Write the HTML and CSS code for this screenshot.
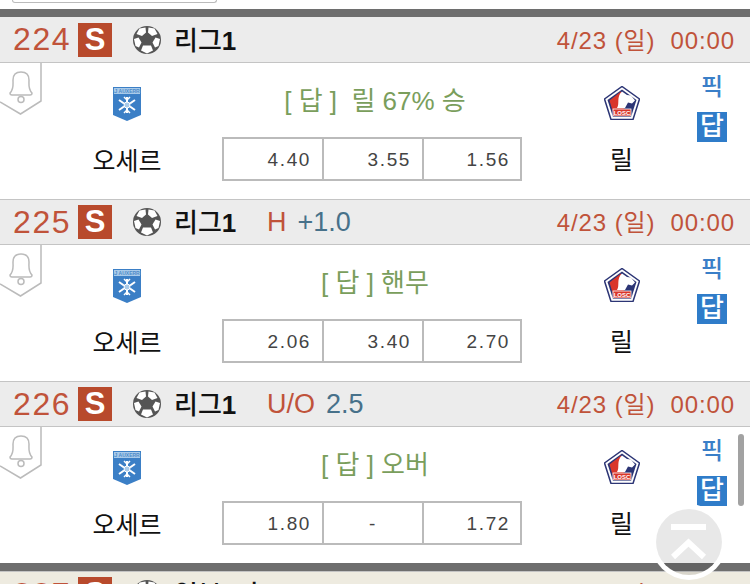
FILE: index.html
```html
<!DOCTYPE html>
<html lang="ko">
  <head>
    <meta charset="UTF-8" />
    <meta name="viewport" content="width=device-width, initial-scale=1.0" />
    <title>경기 목록</title>
    <link rel="stylesheet" href="styles.css">
  </head>
  <body>
    <svg class="defs" width="0" height="0">
      <symbol id="ball" viewBox="0 0 28 28">
        <circle cx="14" cy="14" r="14" fill="#555" />
        <path d="M6.500 2.500 L12.500 1.500 L13 6.500 L9 10 L3.500 8 Z" fill="#fff" />
        <path d="M21.500 2.500 L15.500 1.500 L15 6.500 L19 10 L24.500 8 Z" fill="#fff" />
        <path d="M1 13 L5.500 11.500 L8.500 16.500 L6 21.500 L2.500 20 Z" fill="#fff" />
        <path d="M27 13 L22.500 11.500 L19.500 16.500 L22 21.500 L25.500 20 Z" fill="#fff" />
        <path d="M10 19.500 L18 19.500 L20 24.500 L14 27.500 L8 24.500 Z" fill="#fff" />
      </symbol>
      <symbol id="auxerre" viewBox="0 0 28 34">
        <path d="M0 0 H28 V28 L14 34 L0 28 Z" fill="#3b7fc6" />
        <rect x="1" y="1" width="26" height="6" fill="#a9cbea" />
        <text x="14" y="6" font-size="5" font-family="Liberation Sans" font-weight="bold" fill="#4f8bc9" text-anchor="middle">AJ AUXERRE</text>
        <g stroke="#fff" stroke-width="2" fill="none">
          <path d="M14 10 V15 M14 21 V26 M6 13 L11 16.500 M22 13 L17 16.500 M6 23 L11 19.500 M22 23 L17 19.500" />
          <path d="M11 10 L14 13 L17 10 M11 26 L14 23 L17 26" stroke-width="1.500" />
        </g>
        <circle cx="14" cy="18" r="3" fill="#a9cbea" stroke="#fff" />
      </symbol>
      <symbol id="lille" viewBox="0 0 36 34">
        <path d="M18 0.500 L35.500 13 L29 33.500 H7 L0.500 13 Z" fill="#fff" stroke="#2c3575" stroke-width="1.500" />
        <path d="M18 3.500 L32.500 14 L27 31 H9 L3.500 14 Z" fill="#2c3575" />
        <path d="M17 5.500 L5.500 14.500 L10 29.500 H26 L27 26 L19 22 Z" fill="#d9362b" />
        <path d="M18 5.500 L23 9 L27 9.500 L31 14.500 L28 17.500 L24 16.500 L21 22 L13 22 C16 18 12 11 18 5.500 Z" fill="#fff" />
        <rect x="9" y="23" width="18" height="7" fill="#d9362b" stroke="#fff" stroke-width="0.800" />
        <text x="18" y="29" font-size="6" font-family="Liberation Sans" font-weight="bold" fill="#fff" text-anchor="middle">LOSC</text>
      </symbol>
    </svg>

    <div class="top-strip"><div class="search-edge"></div></div>
    <div class="dark-bar"></div>

    <section class="match">
      <header class="match-head">
        <span class="no">224</span><span class="grade">S</span>
        <svg class="ball"><use href="#ball" /></svg>
        <span class="league">리그<b>1</b></span>
        <span class="date">4/23 (일)<span class="time">00:00</span></span>
      </header>
      <div class="match-body">
        <div class="alarm">
          <svg width="42" height="52" viewBox="0 0 42 52">
            <path d="M41 0 V38 L20.500 51 L0 39" fill="#fff" stroke="#bbb" stroke-width="1.500" />
            <g fill="none" stroke="#bbb" stroke-width="1.500">
              <path d="M10 30 C14 26 13 22 13 17 C13 12 16 9 21 9 C26 9 29 12 29 17 C29 22 28 26 32 30 C32 31 32 32 30 32 H12 C10 32 10 31 10 30 Z" />
              <circle cx="21" cy="36.500" r="3" />
            </g>
          </svg>
        </div>
        <div class="team"><svg class="crest-a"><use href="#auxerre" /></svg><span class="team-name">오세르</span></div>
        <div class="middle">
          <p class="answer">[ 답 ]&nbsp; 릴 67% 승</p>
          <div class="odds"><span>4.40</span><span>3.55</span><span>1.56</span></div>
        </div>
        <div class="team team-away"><svg class="crest-b"><use href="#lille" /></svg><span class="team-name">릴</span></div>
        <div class="pick"><span class="pick-label">픽</span><span class="pick-btn">답</span></div>
      </div>
    </section>

    <section class="match">
      <header class="match-head">
        <span class="no">225</span><span class="grade">S</span>
        <svg class="ball"><use href="#ball" /></svg>
        <span class="league">리그<b>1</b></span>
        <span class="kind">H</span><span class="line">+1.0</span>
        <span class="date">4/23 (일)<span class="time">00:00</span></span>
      </header>
      <div class="match-body">
        <div class="alarm">
          <svg width="42" height="52" viewBox="0 0 42 52">
            <path d="M41 0 V38 L20.500 51 L0 39" fill="#fff" stroke="#bbb" stroke-width="1.500" />
            <g fill="none" stroke="#bbb" stroke-width="1.500">
              <path d="M10 30 C14 26 13 22 13 17 C13 12 16 9 21 9 C26 9 29 12 29 17 C29 22 28 26 32 30 C32 31 32 32 30 32 H12 C10 32 10 31 10 30 Z" />
              <circle cx="21" cy="36.500" r="3" />
            </g>
          </svg>
        </div>
        <div class="team"><svg class="crest-a"><use href="#auxerre" /></svg><span class="team-name">오세르</span></div>
        <div class="middle">
          <p class="answer">[ 답 ] 핸무</p>
          <div class="odds"><span>2.06</span><span>3.40</span><span>2.70</span></div>
        </div>
        <div class="team team-away"><svg class="crest-b"><use href="#lille" /></svg><span class="team-name">릴</span></div>
        <div class="pick"><span class="pick-label">픽</span><span class="pick-btn">답</span></div>
      </div>
    </section>

    <section class="match">
      <header class="match-head">
        <span class="no">226</span><span class="grade">S</span>
        <svg class="ball"><use href="#ball" /></svg>
        <span class="league">리그<b>1</b></span>
        <span class="kind">U/O</span><span class="line">2.5</span>
        <span class="date">4/23 (일)<span class="time">00:00</span></span>
      </header>
      <div class="match-body">
        <div class="alarm">
          <svg width="42" height="52" viewBox="0 0 42 52">
            <path d="M41 0 V38 L20.500 51 L0 39" fill="#fff" stroke="#bbb" stroke-width="1.500" />
            <g fill="none" stroke="#bbb" stroke-width="1.500">
              <path d="M10 30 C14 26 13 22 13 17 C13 12 16 9 21 9 C26 9 29 12 29 17 C29 22 28 26 32 30 C32 31 32 32 30 32 H12 C10 32 10 31 10 30 Z" />
              <circle cx="21" cy="36.500" r="3" />
            </g>
          </svg>
        </div>
        <div class="team"><svg class="crest-a"><use href="#auxerre" /></svg><span class="team-name">오세르</span></div>
        <div class="middle">
          <p class="answer">[ 답 ] 오버</p>
          <div class="odds"><span>1.80</span><span class="odds-none">-</span><span>1.72</span></div>
        </div>
        <div class="team team-away"><svg class="crest-b"><use href="#lille" /></svg><span class="team-name">릴</span></div>
        <div class="pick"><span class="pick-label">픽</span><span class="pick-btn">답</span></div>
      </div>
    </section>

    <div class="dark-bar"></div>
    <section class="match">
      <header class="match-head match-head-next">
        <span class="no">227</span><span class="grade">S</span>
        <svg class="ball"><use href="#ball" /></svg>
        <span class="league">일본J리</span>
        <span class="date">4/23 (일)<span class="time">00:00</span></span>
      </header>
    </section>

    <div class="scroll-thumb"></div>
    <a class="to-top" href="#">
      <svg width="36" height="36" viewBox="0 0 36 36">
        <path d="M0 3 H35" stroke="#fff" stroke-width="6" />
        <path d="M2 33 L17.500 18.500 L33 33" fill="none" stroke="#fff" stroke-width="6" />
      </svg>
    </a>
  </body>
</html>
```

FILE: styles.css
```css
html,
body {
  height: 100%;
}

body {
  margin: 0;
  height: 584px;
  overflow: hidden;
  position: relative;
  font-family: "Liberation Sans", "Noto Sans CJK KR", sans-serif;
  background-color: #fff;
}

.defs {
  display: none;
}

.top-strip {
  height: 9px;
}

.search-edge {
  width: 205px;
  height: 3px;
  margin-left: 12px;
  box-sizing: border-box;
  border: 1px solid #bbb;
  border-top: none;
  border-radius: 0 0 6px 6px;
}

.dark-bar {
  height: 8px;
  background-color: #6e6e6e;
}

.match-head {
  height: 44px;
  display: flex;
  align-items: center;
  padding: 0 15px 0 13px;
  background-color: #ececec;
  border-top: 1px solid #c4c4c4;
  border-bottom: 1px solid #c4c4c4;
}

.match:first-of-type .match-head {
  border-top: none;
  height: 45px;
}

.match-head-next {
  background-color: #eeebe0;
}

.no {
  width: 65px;
  font-size: 32px;
  letter-spacing: 1.600px;
  color: #c0533a;
}

.grade {
  width: 34px;
  height: 34px;
  line-height: 34px;
  text-align: center;
  font-size: 31px;
  font-weight: bold;
  color: #fff;
  background-color: #b84a2c;
}

.ball {
  width: 28px;
  height: 28px;
  margin-left: 21px;
}

.league {
  margin-left: 13px;
  width: 93px;
  font-size: 26px;
  line-height: 30px;
  margin-top: 2px;
  font-weight: 500;
  color: #111;
}

.league b {
  font-weight: bold;
}

.kind {
  font-size: 27px;
  color: #c0533a;
  margin-right: 11px;
}

.line {
  font-size: 27px;
  color: #47718a;
}

.date {
  margin-left: auto;
  font-size: 24px;
  line-height: 30px;
  margin-top: 2px;
  letter-spacing: 0.900px;
  color: #c0533a;
}

.time {
  margin-left: 15px;
}

.match-body {
  height: 136px;
  position: relative;
  box-sizing: border-box;
  padding-left: 32px;
  display: grid;
  grid-template-columns: 190px 300px 170px 40px;
  background-color: #fff;
}

.alarm {
  position: absolute;
  left: 0;
  top: 0;
  line-height: 0;
}

.team {
  display: flex;
  flex-direction: column;
  align-items: center;
  color: #111;
}

.team-away {
  padding-left: 29px;
}

.crest-a {
  width: 28px;
  height: 34px;
  margin-top: 24px;
}

.crest-b {
  width: 36px;
  height: 34px;
  margin-top: 23px;
}

.team-name {
  margin-top: 22px;
  font-size: 25px;
  line-height: 36px;
}

.middle {
  display: flex;
  flex-direction: column;
  align-items: center;
}

.answer {
  margin: 20px 0 0 6px;
  height: 54px;
  font-size: 26px;
  line-height: 36px;
  color: #7a9e5c;
}

.odds {
  display: grid;
  grid-template-columns: 98px 100px 98px;
  width: 300px;
  height: 44px;
  box-sizing: border-box;
  border: 2px solid #bbb;
}

.odds span {
  box-sizing: border-box;
  padding-right: 11px;
  text-align: right;
  font-size: 19px;
  line-height: 42px;
  letter-spacing: 1.600px;
  color: #444;
  border-left: 2px solid #bbb;
}

.odds span:first-child {
  border-left: none;
}

.odds span:last-child {
  padding-right: 10px;
}

.odds .odds-none {
  padding-right: 0;
  text-align: center;
}

.pick {
  display: flex;
  flex-direction: column;
  align-items: center;
  padding-top: 8px;
}

.pick-label {
  font-size: 24px;
  line-height: 32px;
  font-weight: 500;
  color: #3a7fc8;
}

.pick-btn {
  width: 30px;
  height: 30px;
  margin-top: 9px;
  line-height: 28px;
  text-align: center;
  font-size: 26px;
  font-weight: 500;
  color: #fff;
  background-color: #2f7cc9;
}

.scroll-thumb {
  position: absolute;
  left: 738px;
  top: 434px;
  width: 6px;
  height: 72px;
  border-radius: 3px;
  background-color: #a2a2a2;
}

.to-top {
  position: absolute;
  left: 656px;
  top: 509px;
  width: 66px;
  height: 66px;
  display: flex;
  align-items: center;
  justify-content: center;
  border-radius: 50%;
  background-color: rgba(0, 0, 0, 0.09);
  box-shadow: 0 0 0 5px #fff;
}
```
